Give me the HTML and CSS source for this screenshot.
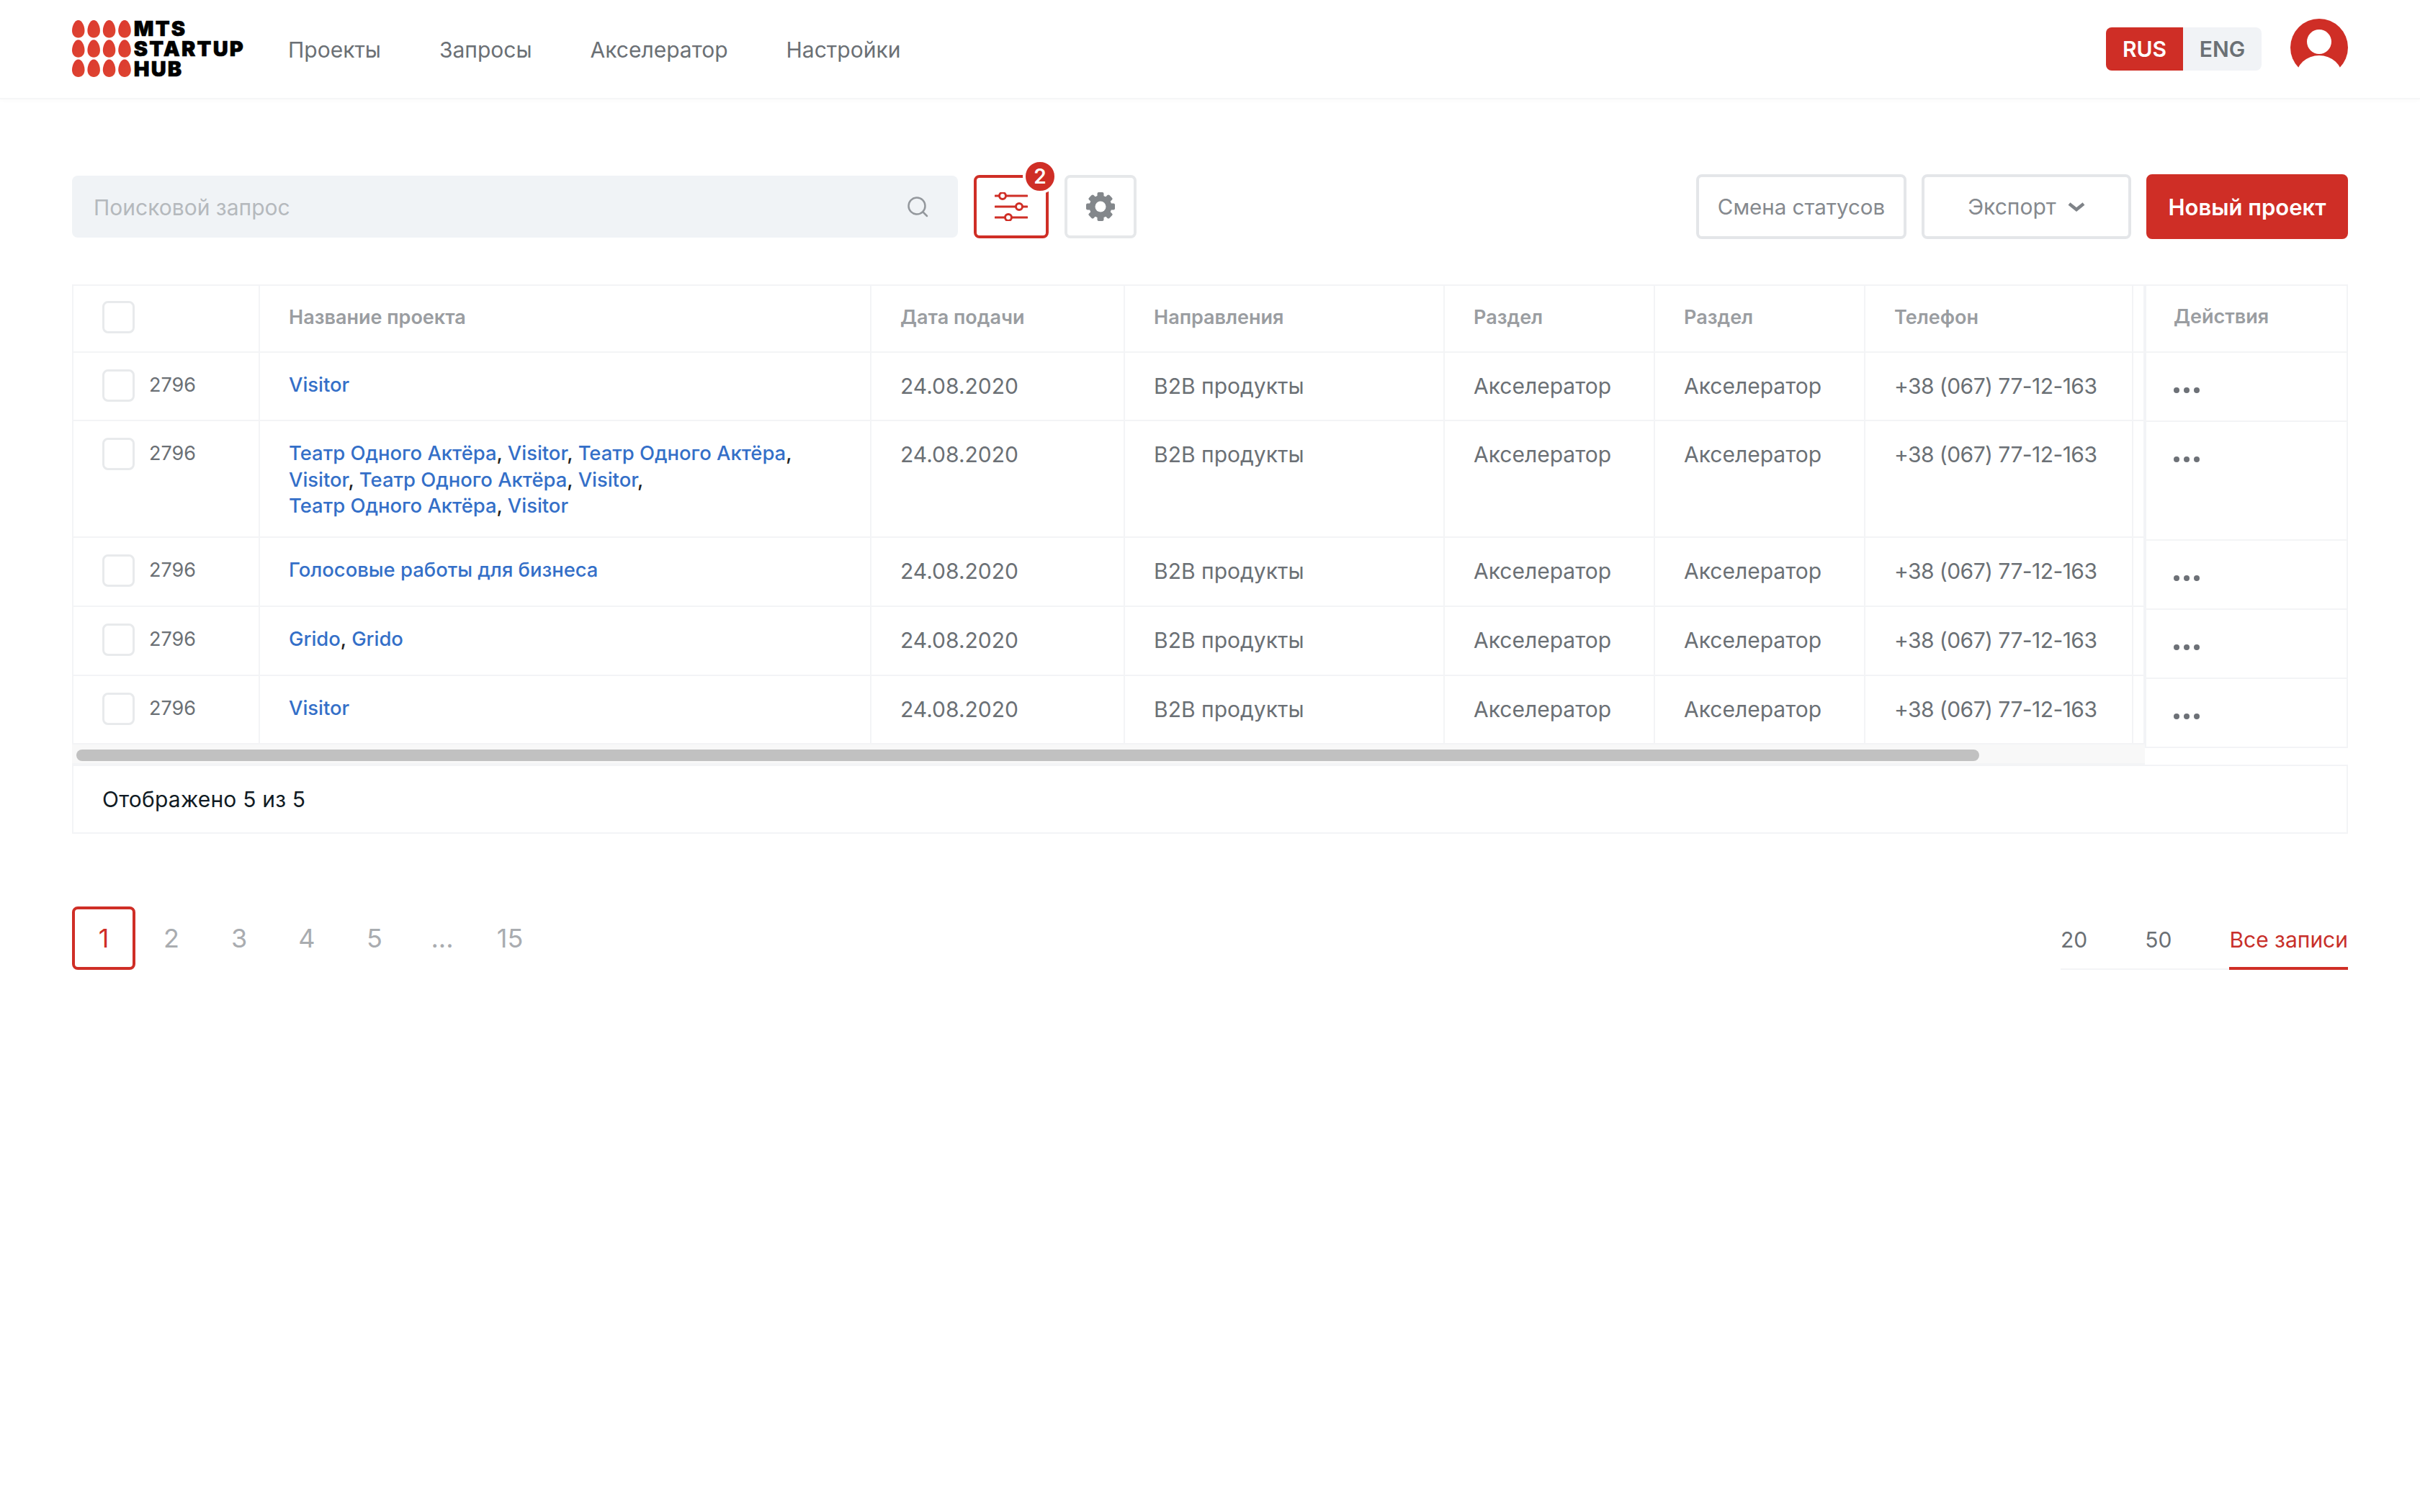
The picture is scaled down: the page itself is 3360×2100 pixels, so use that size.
FILE: index.html
```html
<!DOCTYPE html>
<html lang="ru">
<head>
  <meta charset="utf-8">
  <title>MTS Startup Hub - Проекты</title>
  <link rel="stylesheet" href="styles.css">
</head>
<body>
  <header class="topbar">
    <a class="logo" href="#">
      <svg class="logo-eggs" width="84" height="82" viewBox="0 0 84 82">
        <defs>
          <linearGradient id="eggFill" gradientUnits="userSpaceOnUse" x1="0" y1="0" x2="84" y2="82">
            <stop offset="0" stop-color="#dc3930"/>
            <stop offset="1" stop-color="#e26a33"/>
          </linearGradient>
          <path id="egg" d="M9 0C14 0 18 8 18 15C18 21 14 25 9 25C4 25 0 21 0 15C0 8 4 0 9 0Z"/>
        </defs>
        <g fill="url(#eggFill)">
          <use href="#egg" x="0" y="0"/><use href="#egg" x="22" y="0"/><use href="#egg" x="44" y="0"/><use href="#egg" x="66" y="0"/>
          <use href="#egg" x="0" y="28"/><use href="#egg" x="22" y="28"/><use href="#egg" x="44" y="28"/><use href="#egg" x="66" y="28"/>
          <use href="#egg" x="0" y="56"/><use href="#egg" x="22" y="56"/><use href="#egg" x="44" y="56"/><use href="#egg" x="66" y="56"/>
        </g>
      </svg>
      <span class="logo-text">MTS<br>STARTUP<br>HUB</span>
    </a>
    <nav class="nav">
      <a href="#">Проекты</a>
      <a href="#">Запросы</a>
      <a href="#">Акселератор</a>
      <a href="#">Настройки</a>
    </nav>
    <div class="lang">
      <span class="lang-item active">RUS</span>
      <span class="lang-item">ENG</span>
    </div>
    <svg class="avatar" width="80" height="80" viewBox="0 0 80 80">
      <circle cx="40" cy="40" r="40" fill="#cf2e26"/>
      <ellipse cx="40" cy="32" rx="17" ry="17" fill="#fff"/>
      <ellipse cx="40" cy="80" rx="32" ry="29" fill="#fff"/>
    </svg>
  </header>

  <main class="page">
    <div class="toolbar">
      <div class="search">
        <input type="text" placeholder="Поисковой запрос">
        <svg width="32" height="32" viewBox="0 0 32 32" fill="none" stroke="#94989d" stroke-width="2.5">
          <circle cx="15" cy="15" r="11.5"/>
          <path d="M23.5 23.5L29 29" stroke-linecap="round"/>
        </svg>
      </div>
      <button class="icon-btn filter">
        <svg width="46" height="40" viewBox="0 0 46 40" fill="none" stroke="#cf2e26" stroke-width="3">
          <path d="M1 5H45M1 20H45M1 35H45" stroke-linecap="round"/>
          <circle cx="11" cy="5" r="4.5" fill="#fff"/>
          <circle cx="34" cy="20" r="4.5" fill="#fff"/>
          <circle cx="19" cy="35" r="4.5" fill="#fff"/>
        </svg>
        <span class="badge">2</span>
      </button>
      <button class="icon-btn gear">
        <svg width="42" height="42" viewBox="0 0 42 42" fill="#83878b">
          <circle cx="21" cy="21" r="15.5"/>
          <rect x="16.5" y="1" width="9" height="40" rx="2"/>
          <rect x="16.5" y="1" width="9" height="40" rx="2" transform="rotate(45 21 21)"/>
          <rect x="16.5" y="1" width="9" height="40" rx="2" transform="rotate(90 21 21)"/>
          <rect x="16.5" y="1" width="9" height="40" rx="2" transform="rotate(135 21 21)"/>
          <circle cx="21" cy="21" r="7.5" fill="#fff"/>
        </svg>
      </button>
      <div class="toolbar-right">
        <button class="btn status-btn">Смена статусов</button>
        <button class="btn export-btn">Экспорт
          <svg width="24" height="13" viewBox="0 0 24 13" fill="none" stroke="#7f8388" stroke-width="4.5">
            <path d="M2 2L12 10L22 2"/>
          </svg>
        </button>
        <button class="btn btn-red">Новый проект</button>
      </div>
    </div>

    <div class="table-block">
      <div class="table-scroll">
        <table class="data-table">
          <colgroup>
            <col class="c-id"><col class="c-name"><col class="c-date"><col class="c-dir">
            <col class="c-sec"><col class="c-sec"><col class="c-phone"><col class="c-cut">
          </colgroup>
          <thead>
            <tr>
              <th><span class="check"></span></th>
              <th>Название проекта</th>
              <th>Дата подачи</th>
              <th>Направления</th>
              <th>Раздел</th>
              <th>Раздел</th>
              <th>Телефон</th>
              <th></th>
            </tr>
          </thead>
          <tbody>
            <tr>
              <td class="id-cell"><span class="check"></span>2796</td>
              <td class="name-cell"><a href="#">Visitor</a></td>
              <td>24.08.2020</td><td>B2B продукты</td><td>Акселератор</td><td>Акселератор</td><td class="phone">+38 (067) 77-12-163</td><td></td>
            </tr>
            <tr>
              <td class="id-cell"><span class="check"></span>2796</td>
              <td class="name-cell"><a href="#">Театр Одного Актёра</a>, <a href="#">Visitor</a>, <a href="#">Театр Одного Актёра</a>,<br><a href="#">Visitor</a>, <a href="#">Театр Одного Актёра</a>, <a href="#">Visitor</a>,<br><a href="#">Театр Одного Актёра</a>, <a href="#">Visitor</a></td>
              <td>24.08.2020</td><td>B2B продукты</td><td>Акселератор</td><td>Акселератор</td><td class="phone">+38 (067) 77-12-163</td><td></td>
            </tr>
            <tr class="row-96">
              <td class="id-cell"><span class="check"></span>2796</td>
              <td class="name-cell"><a href="#">Голосовые работы для бизнеса</a></td>
              <td>24.08.2020</td><td>B2B продукты</td><td>Акселератор</td><td>Акселератор</td><td class="phone">+38 (067) 77-12-163</td><td></td>
            </tr>
            <tr class="row-96">
              <td class="id-cell"><span class="check"></span>2796</td>
              <td class="name-cell"><a href="#">Grido</a>, <a href="#">Grido</a></td>
              <td>24.08.2020</td><td>B2B продукты</td><td>Акселератор</td><td>Акселератор</td><td class="phone">+38 (067) 77-12-163</td><td></td>
            </tr>
            <tr>
              <td class="id-cell"><span class="check"></span>2796</td>
              <td class="name-cell"><a href="#">Visitor</a></td>
              <td>24.08.2020</td><td>B2B продукты</td><td>Акселератор</td><td>Акселератор</td><td class="phone">+38 (067) 77-12-163</td><td></td>
            </tr>
          </tbody>
        </table>
        <div class="scrollbar"><div class="scrollbar-thumb"></div></div>
      </div>
      <div class="actions-col">
        <div class="actions-head">Действия</div>
        <div class="actions-row"><span class="dots"><i></i><i></i><i></i></span></div>
        <div class="actions-row tall"><span class="dots"><i></i><i></i><i></i></span></div>
        <div class="actions-row"><span class="dots"><i></i><i></i><i></i></span></div>
        <div class="actions-row"><span class="dots"><i></i><i></i><i></i></span></div>
        <div class="actions-row"><span class="dots"><i></i><i></i><i></i></span></div>
      </div>
    </div>
    <div class="table-footer">Отображено 5 из 5</div>

    <div class="pager-row">
      <div class="pager">
        <a class="current" href="#">1</a>
        <a href="#">2</a>
        <a href="#">3</a>
        <a href="#">4</a>
        <a href="#">5</a>
        <a href="#">...</a>
        <a href="#">15</a>
      </div>
      <div class="per-page">
        <a href="#">20</a>
        <a href="#">50</a>
        <a class="current" href="#">Все записи</a>
      </div>
    </div>
  </main>
</body>
</html>
```
FILE: styles.css
```css
* {
  box-sizing: border-box;
}
body {
  margin: 0;
  background-color: white;
  font-family: Inter, "Noto Sans", sans-serif;
  color: #6b7075;
}
a {
  text-decoration: none;
  color: inherit;
}
button {
  font-family: inherit;
  cursor: pointer;
}

/* top bar */
.topbar {
  display: flex;
  align-items: center;
  height: 138px;
  padding: 0 100px;
  border-bottom: 2px solid #f5f6f7;
  box-shadow: 0 2px 6px rgba(0, 0, 0, 0.02);
}
.logo {
  display: flex;
  align-items: center;
  gap: 4px;
  width: 240px;
  color: black;
  margin-top: -1px;
}
.logo-text {
  font-size: 29px;
  font-weight: 900;
  line-height: 28px;
  letter-spacing: 2.2px;
  -webkit-text-stroke: 0.6px black;
}
.nav {
  display: flex;
  gap: 81px;
  margin-left: 60px;
  margin-top: 1px;
  font-size: 30px;
}
.lang {
  display: flex;
  margin-left: auto;
  height: 60px;
  border-radius: 8px;
  overflow: hidden;
  background-color: #f1f3f6;
  font-size: 30px;
  font-weight: 600;
  line-height: 60px;
  text-align: center;
}
.lang-item {
  width: 109px;
}
.lang-item.active {
  width: 107px;
  background-color: #cf2e26;
  color: white;
}
.avatar {
  margin-left: 40px;
  margin-top: -4px;
}

/* toolbar */
.page {
  padding: 104px 100px 0;
}
.toolbar {
  display: flex;
  align-items: center;
  height: 90px;
}
.search {
  display: flex;
  align-items: center;
  width: 1230px;
  height: 86px;
  padding: 0 40px 0 28px;
  border-radius: 8px;
  background-color: #f0f3f6;
}
.search input {
  flex: 1;
  margin-top: 2px;
  border: none;
  outline: none;
  background: transparent;
  font-family: inherit;
  font-size: 30px;
  color: #6b7075;
}
.search input::placeholder {
  color: #b5b9bd;
  opacity: 1;
}
.icon-btn {
  position: relative;
  display: flex;
  align-items: center;
  justify-content: center;
  height: 88px;
  padding: 0;
  background-color: white;
  border-radius: 8px;
}
.filter {
  width: 104px;
  margin-left: 22px;
  border: 4px solid #cf2e26;
}
.gear {
  width: 100px;
  margin-left: 22px;
  border: 4px solid #e6e8ea;
}
.badge {
  position: absolute;
  top: -26px;
  right: -16px;
  width: 48px;
  height: 48px;
  border: 4px solid white;
  border-radius: 50%;
  background-color: #cf2e26;
  color: white;
  font-size: 28px;
  font-weight: 600;
  line-height: 40px;
  text-align: center;
}
.toolbar-right {
  display: flex;
  gap: 21px;
  margin-left: auto;
}
.btn {
  display: flex;
  align-items: center;
  justify-content: center;
  gap: 16px;
  height: 90px;
  background-color: white;
  border: 4px solid #e4e6e9;
  border-radius: 8px;
  color: #85898e;
  font-size: 30px;
}
.status-btn {
  width: 292px;
  font-size: 29.5px;
}
.export-btn {
  width: 291px;
}
.btn-red {
  width: 280px;
  background-color: #cf2e26;
  border-color: #cf2e26;
  color: white;
  font-size: 31px;
  font-weight: 600;
}

/* table */
.table-block {
  display: flex;
  margin-top: 63px;
}
.table-scroll {
  width: 2878px;
}
.data-table {
  width: 100%;
  table-layout: fixed;
  border-collapse: separate;
  border-spacing: 0;
  border-top: 2px solid #f3f4f6;
  border-left: 2px solid #f3f4f6;
}
.c-id { width: 259px; }
.c-name { width: 849px; }
.c-date { width: 352px; }
.c-dir { width: 444px; }
.c-sec { width: 292px; }
.c-phone { width: 372px; }
.c-cut { width: 16px; }
.data-table th,
.data-table td {
  padding: 0 0 0 40px;
  border-right: 2px solid #f3f4f6;
  border-bottom: 2px solid #f3f4f6;
  vertical-align: top;
  text-align: left;
}
.data-table th {
  height: 93px;
  padding-top: 28px;
  color: #9a9da1;
  font-size: 27px;
  font-weight: 600;
  line-height: 32px;
}
.data-table td {
  height: 95px;
  padding-top: 28px;
  font-size: 30px;
  line-height: 36px;
  white-space: nowrap;
}
.data-table .row-96 td {
  height: 96px;
}
.data-table .phone {
  letter-spacing: -0.55px;
}
.data-table .id-cell {
  padding-top: 23px;
  font-size: 27px;
  line-height: 44px;
}
.data-table .name-cell {
  padding-top: 26px;
  padding-bottom: 24px;
  font-size: 27.4px;
  font-weight: 500;
  line-height: 36.5px;
  color: #222;
}
.name-cell a {
  color: #346fc8;
}
.check {
  display: inline-block;
  width: 45px;
  height: 45px;
  margin-right: 20px;
  border: 3px solid #e8eaec;
  border-radius: 8px;
  vertical-align: top;
}
th .check {
  margin-top: -7px;
}
.scrollbar {
  height: 28px;
  padding: 7px 230px 0 6px;
  background-color: #f8f8f8;
  border-bottom: 2px solid #f3f4f6;
}
.scrollbar-thumb {
  height: 16px;
  border-radius: 8px;
  background-color: #c1c1c1;
}

.actions-col {
  flex: 1;
  align-self: flex-start;
  border: 2px solid #f3f4f6;
  border-bottom: none;
}
.actions-head,
.actions-row {
  padding-left: 38px;
  border-bottom: 2px solid #f3f4f6;
}
.actions-head {
  height: 93px;
  padding-top: 27px;
  color: #9a9da1;
  font-size: 27px;
  font-weight: 600;
  line-height: 32px;
}
.actions-row {
  height: 96px;
  padding-top: 48px;
}
.actions-row.tall {
  height: 165px;
}
.dots {
  display: flex;
  gap: 6px;
}
.dots i {
  width: 8px;
  height: 8px;
  border-radius: 50%;
  background-color: #6d7177;
}
.table-footer {
  height: 96px;
  padding-left: 40px;
  border: 2px solid #f3f4f6;
  color: #111b24;
  font-size: 30px;
  letter-spacing: 0.2px;
  line-height: 92px;
}

/* pagination */
.pager-row {
  display: flex;
  justify-content: space-between;
  margin-top: 101px;
}
.pager {
  display: flex;
  gap: 6px;
}
.pager a {
  width: 88px;
  height: 88px;
  border: 4px solid transparent;
  border-radius: 8px;
  color: #a9acb0;
  font-size: 36px;
  line-height: 80px;
  text-align: center;
}
.pager a.current {
  border-color: #cf2e26;
  color: #cf2e26;
}
.per-page {
  display: flex;
  gap: 80px;
  height: 88px;
  border-bottom: 2px solid #f3f4f6;
  font-size: 30px;
  line-height: 92px;
}
.per-page a.current {
  height: 88px;
  border-bottom: 4px solid #cf2e26;
  color: #c8302a;
}
```
